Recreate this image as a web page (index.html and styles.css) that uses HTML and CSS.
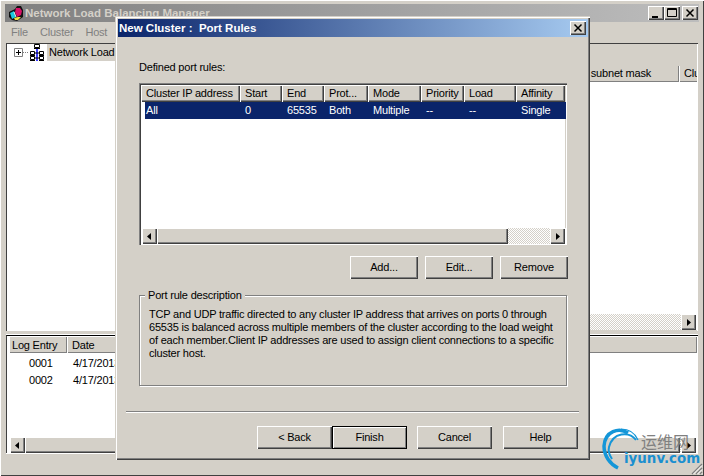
FILE: index.html
```html
<!DOCTYPE html>
<html lang="en">
<head>
<meta charset="utf-8">
<title>Network Load Balancing Manager</title>
<link rel="stylesheet" href="styles.css">
</head>
<body>
<div class="main">
  <div class="titlebar inactive">
    <svg class="app-icon" width="16" height="17" viewBox="0 0 16 17"><path d="M1 7l6-3 2-3 4 0 2 4v7l-6 4-5-1-3-3z" fill="#111"/><path d="M2 8l4-2 2 6-4 2z" fill="#19c8e0"/><path d="M8 3h4l2 3-1 4-4 2-2-5z" fill="#d81068"/><path d="M6 13l4-1 3 0-3 3-3 0z" fill="#f0e040"/><path d="M6 7l2 5" stroke="#e8e8e8"/></svg>
    <span class="title-text">Network Load Balancing Manager</span>
    <div class="win-btns">
      <span class="win-btn"><svg width="16" height="14" viewBox="0 0 16 14"><path d="M4 10h6v2H4z" fill="#000"/></svg></span>
      <span class="win-btn"><svg width="16" height="14" viewBox="0 0 16 14"><path d="M3.500 2.500h9v8h-9zM3.500 3.500h9" fill="none" stroke="#000"/></svg></span>
      <span class="win-btn gap"><svg width="16" height="14" viewBox="0 0 16 14"><path d="M4.500 3.500l7 7M11.500 3.500l-7 7" fill="none" stroke="#000" stroke-width="1.500"/></svg></span>
    </div>
  </div>
  <div class="menubar"><span>File</span><span>Cluster</span><span>Host</span><span>Options</span><span>Help</span></div>
  <div class="workspace">
    <div class="top-pane">
      <div class="tree">
        <div class="tree-row">
          <span class="expander"><svg width="9" height="9" viewBox="0 0 9 9"><path d="M.5.5h8v8h-8z" fill="#fff" stroke="#808080"/><path d="M2 4.500h5M4.500 2v5" stroke="#000"/></svg></span>
          <span class="dots"></span>
          <svg class="cluster-icon" width="18" height="18" viewBox="0 0 18 18"><path d="M9 4v13" stroke="#00f" stroke-width="1.500"/><path d="M5 9h8M5 14h8" stroke="#000"/><g fill="#fff" stroke="#000"><path d="M6.500.5h5v3h-5zM2.500 7.500h4v3h-4zM11.500 7.500h4v3h-4zM2.500 12.500h4v3h-4zM11.500 12.500h4v3h-4z"/></g><path d="M6 4.500h6M2 11.500h5M11 11.500h5M2 16.500h5M11 16.500h5" stroke="#000"/></svg>
          <span class="tree-label">Network Load Balancing Clusters</span>
        </div>
      </div>
      <div class="cluster-list">
        <div class="list-head-band"></div>
        <div class="head-row">
          <span class="head-cell fill">Cluster IP subnet mask</span>
          <span class="head-cell clipped">Cluster</span>
        </div>
        <div class="list-white"></div>
        <div class="hscroll">
          <span class="sb-btn"><svg width="5" height="7" viewBox="0 0 5 7"><path d="M4 0v7L0 3.500z"/></svg></span>
          <span class="sb-thumb wide"></span>
          <span class="sb-track"></span>
          <span class="sb-btn"><svg width="5" height="7" viewBox="0 0 5 7"><path d="M1 0v7l4-3.500z"/></svg></span>
        </div>
      </div>
    </div>
    <div class="bottom-pane">
      <div class="head-row">
        <span class="head-cell log-col">Log Entry</span>
        <span class="head-cell fill">Date</span>
      </div>
      <div class="log-rows">
        <div class="log-row"><span class="log-id">0001</span><span>4/17/2013</span></div>
        <div class="log-row"><span class="log-id">0002</span><span>4/17/2013</span></div>
      </div>
      <div class="hscroll">
        <span class="sb-btn"><svg width="5" height="7" viewBox="0 0 5 7"><path d="M4 0v7L0 3.500z"/></svg></span>
        <span class="sb-thumb wide"></span>
        <span class="sb-track"></span>
        <span class="sb-btn"><svg width="5" height="7" viewBox="0 0 5 7"><path d="M1 0v7l4-3.500z"/></svg></span>
      </div>
    </div>
  </div>
  <svg class="grip" width="13" height="13" viewBox="0 0 13 13"><path d="M12 2L2 12M12 6l-6 6M12 10l-2 2" stroke="#808080" stroke-width="1.400"/><path d="M12 3.500L3.500 12M12 7.500L7.500 12M12 11.500l-.5.5" stroke="#fff"/></svg>
</div>

<div class="dialog">
  <div class="dlg-title">
    <span>New Cluster :&nbsp; Port Rules</span>
    <span class="dlg-close"><svg width="16" height="14" viewBox="0 0 16 14"><path d="M4.500 3.500l7 7M11.500 3.500l-7 7" fill="none" stroke="#000" stroke-width="1.500"/></svg></span>
  </div>
  <div class="dlg-body">
    <div class="caption">Defined port rules:</div>
    <div class="rules">
      <div class="rules-head">
        <span class="col c1">Cluster IP address</span>
        <span class="col c2">Start</span>
        <span class="col c3">End</span>
        <span class="col c4">Prot...</span>
        <span class="col c5">Mode</span>
        <span class="col c6">Priority</span>
        <span class="col c7">Load</span>
        <span class="col c8">Affinity</span>
      </div>
      <div class="rules-row">
        <span class="cell c1">All</span>
        <span class="cell c2">0</span>
        <span class="cell c3">65535</span>
        <span class="cell c4">Both</span>
        <span class="cell c5">Multiple</span>
        <span class="cell c6">--</span>
        <span class="cell c7">--</span>
        <span class="cell c8">Single</span>
      </div>
      <div class="rules-space"></div>
      <div class="hscroll">
        <span class="sb-btn"><svg width="5" height="7" viewBox="0 0 5 7"><path d="M4 0v7L0 3.500z"/></svg></span>
        <span class="sb-thumb rules-thumb"></span>
        <span class="sb-track"></span>
        <span class="sb-btn"><svg width="5" height="7" viewBox="0 0 5 7"><path d="M1 0v7l4-3.500z"/></svg></span>
      </div>
    </div>
    <div class="rule-actions">
      <span class="btn action">Add...</span>
      <span class="btn action">Edit...</span>
      <span class="btn action">Remove</span>
    </div>
    <div class="group">
      <span class="legend">Port rule description</span>
      <p class="desc">TCP and UDP traffic directed to any cluster IP address that arrives on ports 0 through<br>65535 is balanced across multiple members of the cluster according to the load weight<br>of each member.Client IP addresses are used to assign client connections to a specific<br>cluster host.</p>
    </div>
  </div>
  <div class="separator"></div>
  <div class="wizard-actions">
    <span class="btn wiz">&lt; Back</span>
    <span class="btn wiz default">Finish</span>
    <span class="btn wiz spaced">Cancel</span>
    <span class="btn wiz spaced wide-gap">Help</span>
  </div>
</div>

<div class="watermark">
  <svg class="wm-logo" width="44" height="42" viewBox="0 0 44 42"><g fill="none" stroke="#1496d8"><path d="M27 5C18 -1 4 3 3 18c0 10 6 18 14 22" stroke-width="3.500"/><path d="M35 12C28 3 12 4 8 19c-1 4 1 9 3 12" stroke-width="2"/><path d="M20 1c8 0 14 4 17 11" stroke-width="1.200"/></g></svg>
  <span class="wm-cn">运维网</span>
  <span class="wm-en">iyunv.com</span>
</div>
</body>
</html>
```
FILE: styles.css
```css
* { box-sizing: border-box; }
html, body { margin: 0; padding: 0; }
body {
  width: 704px; height: 476px; overflow: hidden; position: relative;
  font: 11px/13px "Liberation Sans", Arial, sans-serif; color: #000; background: #d4d0c8;
  letter-spacing: -0.2px;
}
svg { display: block; }

.main {
  width: 704px; height: 476px; padding: 4px 5px 0; position: relative;
  display: flex; flex-direction: column; background: #d4d0c8;
  box-shadow: inset 1px 1px 0 #fff, inset -1px -1px 0 #404040, inset 1px 0 0 #5b84c4;
}
.titlebar {
  height: 18px; display: flex; align-items: center; padding-left: 3px; flex: none;
  background: linear-gradient(90deg, #808080, #bdbdbd);
}
.app-icon { margin-right: 1px; }
.title-text { font-weight: bold; color: #d4d0c8; font-size: 11.500px; letter-spacing: 0; white-space: nowrap; }
.win-btns { margin-left: auto; display: flex; padding-right: 1px; }
.win-btn, .dlg-close {
  width: 16px; height: 14px; background: #d4d0c8; display: block;
  box-shadow: inset 1px 1px 0 #fff, inset -1px -1px 0 #404040, inset -2px -2px 0 #808080;
}
.win-btn.gap { margin-left: 2px; }
.menubar { height: 21px; flex: none; display: flex; align-items: center; color: #808080; padding-left: 6px; gap: 12px; }

.workspace { flex: none; margin-left: 1px; width: 692px; }
.top-pane { height: 288px; display: flex; box-shadow: inset 1px 1px 0 #404040, inset 0 1px 0 #000; background: #d4d0c8; }
.tree { width: 300px; margin-top: 1px; margin-left: 1px; background: #fff; }
.tree-row { display: flex; align-items: center; height: 17px; padding-left: 7px; }
.dots { width: 5px; border-top: 1px dotted #808080; }
.cluster-icon { margin-right: 1px; }
.tree-label { background: #d4d0c8; padding: 2px; white-space: nowrap; }
.cluster-list { flex: 1; margin-top: 1px; display: flex; flex-direction: column; min-width: 0; border-right: 1px solid #fff; }
.list-head-band { height: 22px; flex: none; }
.head-row { height: 16px; flex: none; display: flex; background: #d4d0c8; box-shadow: inset 0 -1px 0 #808080; }
.head-cell { display: block; padding: 1px 5px 0; white-space: nowrap; overflow: hidden; border-right: 1px solid #808080; box-shadow: inset 1px 0 0 #fff; }
.fill { flex: 1; text-align: right; padding-right: 27px; }
.clipped { width: 18px; padding-left: 5px; padding-right: 0; border-right: 0; }
.list-white { flex: 1; background: #fff; }

.hscroll { height: 16px; flex: none; display: flex; background: #fff; padding: 0 1px 0 1px; }
.sb-btn {
  width: 15px; height: 16px; flex: none; background: #d4d0c8; display: flex; align-items: center; justify-content: center;
  box-shadow: inset 1px 1px 0 #fff, inset -1px -1px 0 #404040, inset -2px -2px 0 #808080;
}
.sb-thumb { height: 16px; flex: none; background: #d4d0c8; box-shadow: inset 1px 1px 0 #fff, inset -1px -1px 0 #404040, inset -2px -2px 0 #808080; }
.wide { width: 300px; }
.rules-thumb { width: 351px; }
.sb-track {
  flex: 1; background-color: #d4d0c8;
  background-image: conic-gradient(#fff 25%, #d4d0c8 0 50%, #fff 0 75%, #d4d0c8 0);
  background-size: 2px 2px;
}
.cluster-list .hscroll { margin-bottom: 1px; }
.cluster-list .wide { width: 92px; }
.bottom-pane {
  margin-top: 4px; height: 118px; padding: 1px 1px 0 2px; display: flex; flex-direction: column;
  background: #fff; border-top: 1px solid #000; border-left: 1px solid #404040;
  box-shadow: 0 1px 0 #fff, 0 -1px 0 #fff;
}
.bottom-pane .head-cell { padding-top: 2px; }
.log-col { width: 58px; padding-left: 3px; }
.bottom-pane .fill { text-align: left; padding-left: 5px; }
.log-rows { flex: 1; padding-top: 2px; }
.log-row { display: flex; height: 17px; align-items: center; white-space: nowrap; }
.log-id { width: 64px; padding-left: 20px; }
.bottom-pane .wide { width: 655px; }
.grip { position: absolute; right: 1px; bottom: 1px; }

.dialog {
  position: absolute; left: 115px; top: 16px; width: 475px; height: 444px;
  background: #d4d0c8; padding: 3px 2px 0 3px;
  display: flex; flex-direction: column;
  box-shadow: inset 1px 1px 0 #d4d0c8, inset 2px 2px 0 #fff, inset -1px -1px 0 #404040, inset -2px -2px 0 #808080;
}
.dlg-title {
  height: 18px; flex: none; display: flex; justify-content: space-between; align-items: center; padding: 0 2px 0 1px;
  background: linear-gradient(90deg, #0a246a, #a6caf0); color: #fff; font-weight: bold; font-size: 11.500px; letter-spacing: 0;
}
.dlg-body { padding: 24px 20px 0 21px; flex: none; }
.caption { height: 22px; line-height: 13px; }
.rules {
  height: 162px; padding: 2px 1px 1px 2px; display: flex; flex-direction: column; background: #fff; width: 428px;
  box-shadow: inset 1px 1px 0 #808080, inset 2px 2px 0 #404040, inset -1px -1px 0 #fff, inset -2px -2px 0 #d4d0c8;
}
.rules-head { height: 17px; flex: none; display: flex; }
.col {
  background: #d4d0c8; padding: 2px 5px 0; white-space: nowrap; overflow: hidden; height: 17px; display: block;
  box-shadow: inset 1px 1px 0 #fff, inset -1px -1px 0 #404040, inset -2px -2px 0 #808080;
}
.rules-row { height: 17px; flex: none; display: flex; background: #0a246a; color: #fff; margin-left: 4px; }
.cell { display: block; padding: 2px 5px 0; white-space: nowrap; }
.c1 { width: 99px; }
.c2 { width: 42px; }
.c3 { width: 42px; }
.c4 { width: 44px; }
.c5 { width: 53px; }
.c6 { width: 43px; }
.c7 { width: 52px; }
.c8 { width: 49px; }
.rules-row .c1 { width: 95px; padding-left: 1px; }
.rules-space { flex: 1; }

.rule-actions { display: flex; justify-content: flex-end; gap: 7px; margin-top: 11px; width: 429px; }
.btn {
  display: flex; align-items: center; justify-content: center; background: #d4d0c8; height: 23px;
  box-shadow: inset 1px 1px 0 #fff, inset -1px -1px 0 #404040, inset -2px -2px 0 #808080;
}
.action { width: 68px; }
.group {
  position: relative; margin-top: 16px; height: 91px; width: 428px; padding: 12px 9px 0;
  border: 1px solid #808080; box-shadow: inset 1px 1px 0 #fff, 1px 1px 0 #fff;
}
.legend { position: absolute; left: 5px; top: -7px; background: #d4d0c8; padding: 0 3px; white-space: nowrap; }
.desc { margin: 0; white-space: nowrap; }
.separator { margin: 25px 9px 0 8px; height: 2px; flex: none; background: #808080; box-shadow: inset 0 -1px 0 #fff; }
.wizard-actions { display: flex; margin-top: 13px; padding-left: 139px; }
.wiz { width: 75px; }
.default { box-shadow: inset 0 0 0 1px #000, inset 2px 2px 0 #fff, inset -2px -2px 0 #808080; }
.spaced { margin-left: 10px; }
.wide-gap { margin-left: 11px; }

.watermark { position: absolute; left: 601px; top: 428px; width: 103px; height: 48px; pointer-events: none; letter-spacing: 0; }
.wm-logo { position: absolute; left: 0; top: 0; }
.wm-cn { position: absolute; left: 40px; top: 3px; font: 16px/20px "Noto Sans CJK SC", sans-serif; color: #808080; white-space: nowrap; }
.wm-en { position: absolute; left: 23px; top: 23px; font: bold 13.400px/16px "DejaVu Sans", sans-serif; color: #1a8fd0; white-space: nowrap; }
```
